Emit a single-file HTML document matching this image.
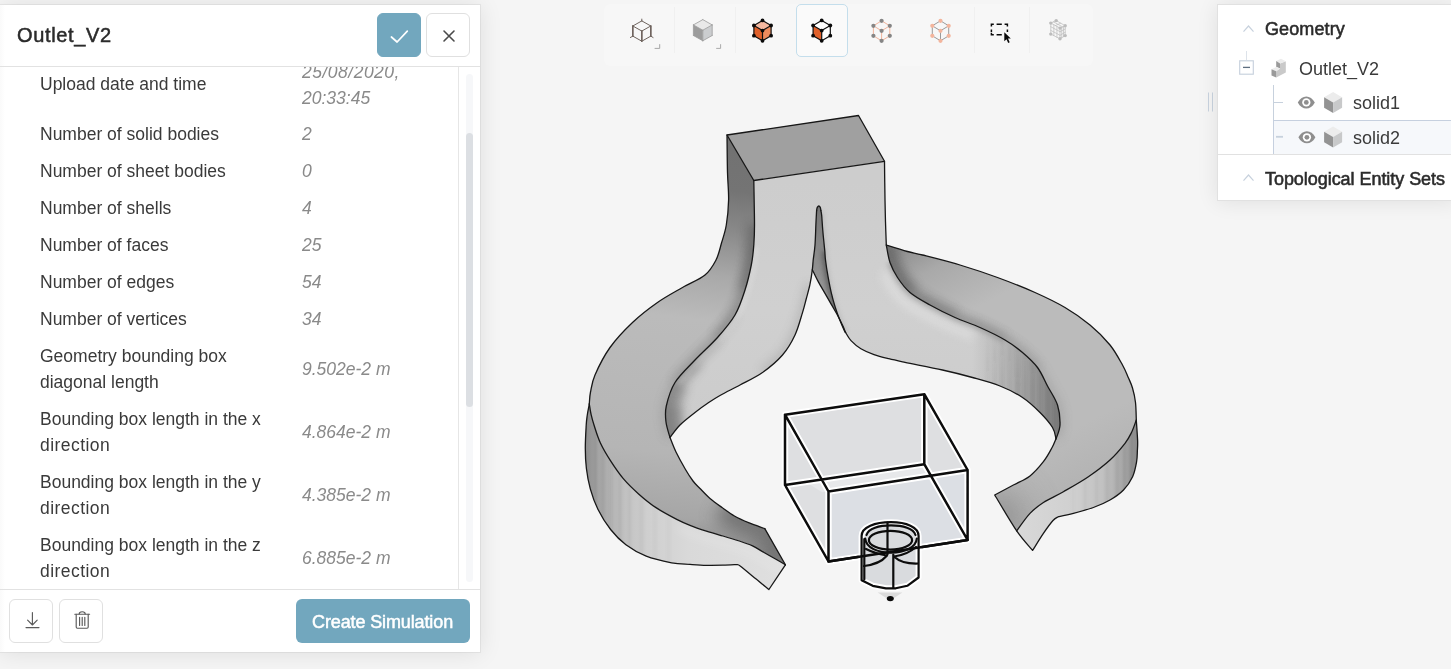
<!DOCTYPE html>
<html lang="en">
<head>
<meta charset="utf-8">
<title>Outlet_V2</title>
<style>
*{box-sizing:border-box;margin:0;padding:0}
html,body{width:1451px;height:669px;overflow:hidden}
body{background:#f5f5f5;font-family:"Liberation Sans",sans-serif;color:#333;position:relative}
.abs{position:absolute}
/* force grayscale text anti-aliasing (as in the reference) */
#lp h1,#scroll,#create span,#rp .sec,#rp .it{will-change:transform}
/* ---------- left panel ---------- */
#lp{position:absolute;left:0;top:5px;width:480px;height:647px;background:linear-gradient(to right,#fafafa,#fff 5px) #fff;box-shadow:0 0 0 1px rgba(0,0,0,.05),0 1px 22px rgba(0,0,0,.10)}
#lp .hd{position:absolute;left:0;top:0;width:480px;height:62px;border-bottom:1px solid #e2e2e2}
#lp h1{position:absolute;left:17px;top:17px;font-size:20px;line-height:26px;font-weight:400;color:#2b2b2b;letter-spacing:.65px;white-space:nowrap;-webkit-text-stroke:.5px #2b2b2b}
.btn{position:absolute;width:44px;height:44px;border-radius:6px;border:1px solid #e0e0e0;background:#fff}
.btn svg{position:absolute;left:0;top:0}
.btn.pri{background:#72a7be;border-color:#72a7be}
#scroll{position:absolute;left:0;top:62px;width:480px;height:522px;overflow:hidden}
#scroll .vl{position:absolute;left:458px;top:0;width:1px;height:522px;background:#e6e6e6}
#scroll .trk{position:absolute;left:466px;top:7px;width:7px;height:508px;border-radius:4px;background:#f6f7f9}
#scroll .thb{position:absolute;left:466px;top:66px;width:7px;height:274px;border-radius:4px;background:#dcdfe3}
.row{position:absolute;left:40px;width:400px;font-size:17.5px;line-height:26px;color:#3a3a3a;white-space:nowrap}
.row .v{position:absolute;left:262px;top:0;font-style:italic;color:#8a8a8a}
#lp .ft{position:absolute;left:0;top:584px;width:480px;height:63px;border-top:1px solid #e2e2e2}
#create{position:absolute;left:296px;top:594px;width:174px;height:44px;border-radius:6px;background:#72a7be;color:#fff;font-weight:400;font-size:18px;letter-spacing:-.12px;line-height:46px;text-align:center;overflow:hidden;white-space:nowrap;-webkit-text-stroke:.5px #fff}
/* ---------- toolbar ---------- */
#tb{position:absolute;left:604px;top:4px;width:489px;height:62px;border-radius:6px;background:rgba(255,255,255,.22)}
#tb .sep{position:absolute;top:3px;width:1px;height:46px;background:#f0f0f0}
#tb .sel{position:absolute;left:192px;top:0;width:52px;height:53px;border:1px solid #c4deec;border-radius:5px;background:#fafafa}
/* ---------- right panel ---------- */
#rp{position:absolute;left:1217px;top:4px;width:240px;height:197px;background:#fff;border:1px solid #e1e1e1;box-shadow:0 1px 20px rgba(0,0,0,.09)}
#rp .sec{position:absolute;left:47px;font-size:18px;font-weight:400;color:#2b2b2b;white-space:nowrap;line-height:24px;-webkit-text-stroke:.55px #2b2b2b}
#rp .it{position:absolute;font-size:18px;color:#3a3a3a;white-space:nowrap;line-height:24px}
#rp .selrow{position:absolute;left:55px;top:115px;width:190px;height:35px;background:#f6f8fb;border:1px solid #c6d0df}
#rp .div{position:absolute;left:0;top:149px;width:240px;height:1px;background:#e1e1e1}
</style>
</head>
<body>
<svg class="abs" style="left:0;top:0" width="1451" height="669" viewBox="0 0 1451 669">
<defs>
<linearGradient id="gLtop" gradientUnits="userSpaceOnUse" x1="740" y1="150" x2="690" y2="560"><stop offset="0" stop-color="#727272"/><stop offset=".10" stop-color="#747474"/><stop offset=".2" stop-color="#8a8a8a"/><stop offset=".31" stop-color="#a9a9a9"/><stop offset=".42" stop-color="#bbbbbb"/><stop offset=".75" stop-color="#b5b5b5"/><stop offset=".90" stop-color="#a6a6a6"/><stop offset="1" stop-color="#858585"/></linearGradient>
<linearGradient id="gLwall" gradientUnits="userSpaceOnUse" x1="586" y1="0" x2="790" y2="0"><stop offset="0" stop-color="#8e8e8e"/><stop offset=".06" stop-color="#a5a5a5"/><stop offset=".13" stop-color="#b5b5b5"/><stop offset=".2" stop-color="#c3c3c3"/><stop offset=".3" stop-color="#cfcfcf"/><stop offset=".5" stop-color="#d9d9d9"/><stop offset="1" stop-color="#e0e0e0"/></linearGradient>
<linearGradient id="gFront" gradientUnits="userSpaceOnUse" x1="0" y1="180" x2="0" y2="440"><stop offset="0" stop-color="#cdcdcd"/><stop offset=".5" stop-color="#d0d0d0"/><stop offset="1" stop-color="#cbcbcb"/></linearGradient>
<linearGradient id="gRtop" gradientUnits="userSpaceOnUse" x1="890" y1="250" x2="1030" y2="520"><stop offset="0" stop-color="#8c8c8c"/><stop offset=".12" stop-color="#a9a9a9"/><stop offset=".3" stop-color="#bbbbbb"/><stop offset=".8" stop-color="#bbbbbb"/><stop offset="1" stop-color="#b2b2b2"/></linearGradient>
<linearGradient id="gRwall" gradientUnits="userSpaceOnUse" x1="1138" y1="0" x2="1020" y2="0"><stop offset="0" stop-color="#888888"/><stop offset=".1" stop-color="#a2a2a2"/><stop offset=".2" stop-color="#b4b4b4"/><stop offset=".3" stop-color="#c1c1c1"/><stop offset=".55" stop-color="#d0d0d0"/><stop offset="1" stop-color="#d8d8d8"/></linearGradient>
<linearGradient id="gWedge" gradientUnits="userSpaceOnUse" x1="0" y1="206" x2="0" y2="332"><stop offset="0" stop-color="#767676"/><stop offset=".4" stop-color="#8c8c8c"/><stop offset="1" stop-color="#a4a4a4"/></linearGradient>
<linearGradient id="gStripe" gradientUnits="userSpaceOnUse" x1="0" y1="335" x2="0" y2="385"><stop offset="0" stop-color="#484848" stop-opacity="0"/><stop offset="1" stop-color="#484848" stop-opacity="1"/></linearGradient>
<linearGradient id="gRinner" gradientUnits="userSpaceOnUse" x1="972" y1="0" x2="1060" y2="0"><stop offset="0" stop-color="#7a7a7a" stop-opacity="0"/><stop offset=".35" stop-color="#7a7a7a" stop-opacity=".28"/><stop offset=".7" stop-color="#7a7a7a" stop-opacity=".62"/><stop offset="1" stop-color="#767676" stop-opacity=".95"/></linearGradient>
<filter id="b1" filterUnits="userSpaceOnUse" x="520" y="90" width="680" height="540"><feGaussianBlur stdDeviation="1.1"/></filter>
<filter id="b2" filterUnits="userSpaceOnUse" x="520" y="90" width="680" height="540"><feGaussianBlur stdDeviation="2.2"/></filter>
<filter id="b4" filterUnits="userSpaceOnUse" x="520" y="90" width="680" height="540"><feGaussianBlur stdDeviation="5"/></filter>
<filter id="b14" filterUnits="userSpaceOnUse" x="520" y="90" width="680" height="540"><feGaussianBlur stdDeviation="15"/></filter>
<filter id="b8" filterUnits="userSpaceOnUse" x="520" y="90" width="680" height="540"><feGaussianBlur stdDeviation="9"/></filter>
<clipPath id="cLtop"><path d="M727.0 135.0 C727.1 141.2 727.2 161.7 727.5 172.5 C727.8 183.3 728.8 191.2 728.6 200.0 C728.4 208.8 727.5 217.8 726.3 225.0 C725.1 232.2 723.2 237.2 721.5 243.0 C719.8 248.8 718.8 254.7 716.0 260.0 C713.2 265.3 710.6 270.4 705.0 275.0 C699.4 279.6 690.4 282.9 682.5 287.5 C674.6 292.1 665.8 296.7 657.5 302.5 C649.2 308.3 640.4 315.0 632.5 322.5 C624.6 330.0 616.2 338.8 610.0 347.5 C603.8 356.2 598.2 367.6 595.0 375.0 C591.8 382.4 591.5 387.2 590.5 392.0 C589.5 396.8 589.5 402.0 589.3 404.0 C589.6 405.7 590.2 410.5 591.0 414.0 C591.8 417.5 592.4 420.2 594.0 425.0 C595.6 429.8 597.6 437.0 600.4 443.0 C603.2 449.0 606.8 455.0 610.6 460.9 C614.4 466.8 618.6 473.1 623.3 478.6 C628.0 484.1 633.1 489.0 638.6 493.9 C644.1 498.8 650.0 503.7 656.4 507.9 C662.8 512.1 671.1 516.4 676.7 519.3 C682.3 522.2 685.0 523.3 690.0 525.3 C695.0 527.3 700.9 529.3 706.4 531.1 C711.9 532.9 717.4 534.4 722.9 536.0 C728.4 537.6 734.4 539.4 739.3 541.0 C744.2 542.6 748.4 544.0 752.5 545.9 C756.6 547.8 760.2 550.3 764.0 552.5 C767.8 554.7 771.9 557.0 775.5 559.0 C779.1 561.0 783.8 563.8 785.4 564.8 L764.8 528.6 C762.2 527.6 754.3 525.0 749.2 522.9 C744.1 520.8 738.9 518.6 734.4 516.0 C729.9 513.4 726.1 510.4 722.0 507.5 C717.9 504.6 713.7 501.7 710.0 498.5 C706.3 495.3 702.8 491.4 700.0 488.5 C697.2 485.6 695.4 484.2 693.0 481.0 C690.6 477.8 688.3 474.3 685.5 469.5 C682.7 464.7 678.6 457.3 676.0 452.0 C673.4 446.7 671.0 439.9 670.0 437.5 C669.3 434.9 666.6 427.2 666.0 422.0 C665.4 416.8 664.8 412.6 666.3 406.0 C667.8 399.4 670.2 390.2 675.0 382.5 C679.8 374.8 687.9 367.5 695.0 360.0 C702.1 352.5 710.8 345.0 717.5 337.5 C724.2 330.0 730.4 322.9 735.0 315.0 C739.6 307.1 742.3 298.3 745.0 290.0 C747.7 281.7 749.8 272.5 751.3 265.0 C752.8 257.5 753.3 251.7 753.8 245.0 C754.3 238.3 754.5 235.8 754.5 225.0 C754.5 214.2 753.9 187.9 753.8 180.5 Z"/></clipPath>
<clipPath id="cLwall"><path d="M589.3 404.0 C589.6 405.7 590.2 410.5 591.0 414.0 C591.8 417.5 592.4 420.2 594.0 425.0 C595.6 429.8 597.6 437.0 600.4 443.0 C603.2 449.0 606.8 455.0 610.6 460.9 C614.4 466.8 618.6 473.1 623.3 478.6 C628.0 484.1 633.1 489.0 638.6 493.9 C644.1 498.8 650.0 503.7 656.4 507.9 C662.8 512.1 671.1 516.4 676.7 519.3 C682.3 522.2 685.0 523.3 690.0 525.3 C695.0 527.3 700.9 529.3 706.4 531.1 C711.9 532.9 717.4 534.4 722.9 536.0 C728.4 537.6 734.4 539.4 739.3 541.0 C744.2 542.6 748.4 544.0 752.5 545.9 C756.6 547.8 760.2 550.3 764.0 552.5 C767.8 554.7 771.9 557.0 775.5 559.0 C779.1 561.0 783.8 563.8 785.4 564.8 L768.9 589.5 C766.7 587.7 760.5 582.7 755.8 578.8 C751.1 574.9 743.6 568.6 740.5 566.2 C737.4 563.8 737.5 564.9 736.9 564.6 C734.6 564.7 728.0 565.1 722.9 565.2 C717.8 565.3 711.9 565.4 706.4 565.3 C700.9 565.2 695.8 564.8 690.0 564.4 C684.2 564.0 678.9 564.2 671.6 562.8 C664.3 561.4 653.8 559.2 646.2 556.2 C638.6 553.2 631.8 549.2 625.9 544.8 C620.0 540.3 615.3 535.4 610.6 529.5 C605.9 523.6 601.3 516.0 597.9 509.2 C594.5 502.4 592.2 495.6 590.3 488.8 C588.4 482.0 587.2 475.3 586.4 468.5 C585.6 461.7 585.3 455.2 585.3 448.0 C585.3 440.8 585.9 430.8 586.2 425.3 C586.5 419.8 586.8 418.6 587.3 415.0 C587.8 411.4 589.0 405.8 589.3 404.0 Z"/></clipPath>
<clipPath id="cFront"><path d="M753.8 180.5 L884.5 161.3 C884.6 167.8 884.8 189.9 885.0 200.0 C885.2 210.1 885.3 214.5 885.5 222.0 C885.7 229.5 886.2 241.2 886.3 245.0 C886.9 247.9 888.1 257.1 890.0 262.5 C891.9 267.9 894.2 272.5 897.5 277.5 C900.8 282.5 904.6 287.9 910.0 292.5 C915.4 297.1 922.5 300.8 930.0 305.0 C937.5 309.2 946.7 313.8 955.0 317.5 C963.3 321.2 971.7 323.8 980.0 327.5 C988.3 331.2 997.9 335.8 1005.0 340.0 C1012.1 344.2 1017.1 347.9 1022.5 352.5 C1027.9 357.1 1033.3 361.9 1037.5 367.5 C1041.7 373.1 1044.2 379.8 1047.5 386.0 C1050.8 392.2 1055.4 398.5 1057.5 405.0 C1059.6 411.5 1060.2 419.4 1060.0 425.0 C1059.8 430.6 1056.7 436.5 1056.0 438.8 C1055.4 436.9 1055.2 431.9 1052.5 427.5 C1049.8 423.1 1045.0 417.5 1040.0 412.5 C1035.0 407.5 1029.2 401.9 1022.5 397.5 C1015.8 393.1 1008.3 389.3 1000.0 386.0 C991.7 382.7 982.1 380.2 972.5 377.5 C962.9 374.8 953.8 372.5 942.5 370.0 C931.2 367.5 914.0 364.2 905.0 362.3 C896.0 360.4 894.0 360.0 888.8 358.7 C883.6 357.4 878.6 356.2 874.0 354.6 C869.4 353.0 864.7 351.1 860.9 348.8 C857.1 346.5 853.6 343.3 851.0 340.6 C848.4 337.9 846.4 333.8 845.5 332.4 C845.3 332.1 845.4 332.9 844.4 330.7 C843.4 328.5 841.0 323.0 839.5 319.2 C838.0 315.4 836.8 312.1 835.4 307.7 C834.0 303.3 832.5 298.1 831.3 292.9 C830.1 287.7 829.0 281.9 828.0 276.4 C827.0 270.9 826.0 264.2 825.5 260.0 C825.0 255.8 825.2 255.9 824.8 251.0 C824.3 246.1 823.3 236.7 822.8 230.8 C822.3 224.9 822.0 219.0 821.7 215.6 C821.4 212.2 821.0 211.3 820.9 210.5 C820.8 210.0 820.6 208.2 820.3 207.4 C819.9 206.7 819.3 206.0 818.8 206.0 C818.3 206.0 817.7 206.7 817.3 207.4 C816.9 208.2 816.7 210.0 816.6 210.5 C816.5 212.4 816.3 216.2 816.0 222.0 C815.7 227.8 815.5 238.7 815.0 245.0 C814.5 251.3 813.7 255.8 813.2 260.0 C812.8 264.1 812.8 265.8 812.3 269.9 C811.8 274.0 810.9 279.8 809.9 284.7 C808.9 289.6 807.4 294.4 806.2 299.0 C805.0 303.6 804.4 306.6 802.5 312.6 C800.6 318.6 798.3 327.9 795.0 335.0 C791.7 342.1 787.9 348.8 782.5 355.0 C777.1 361.2 769.6 367.5 762.5 372.5 C755.4 377.5 747.1 381.2 740.0 385.0 C732.9 388.8 725.3 392.5 720.0 395.5 C714.7 398.5 712.2 400.2 708.0 403.0 C703.8 405.8 699.7 408.8 695.0 412.5 C690.3 416.2 684.2 420.8 680.0 425.0 C675.8 429.2 671.7 435.4 670.0 437.5 C669.3 434.9 666.6 427.2 666.0 422.0 C665.4 416.8 664.8 412.6 666.3 406.0 C667.8 399.4 670.2 390.2 675.0 382.5 C679.8 374.8 687.9 367.5 695.0 360.0 C702.1 352.5 710.8 345.0 717.5 337.5 C724.2 330.0 730.4 322.9 735.0 315.0 C739.6 307.1 742.3 298.3 745.0 290.0 C747.7 281.7 749.8 272.5 751.3 265.0 C752.8 257.5 753.3 251.7 753.8 245.0 C754.3 238.3 754.5 235.8 754.5 225.0 C754.5 214.2 753.9 187.9 753.8 180.5 Z"/></clipPath>
<clipPath id="cRtop"><path d="M886.3 245.0 C889.8 246.1 901.5 249.8 907.5 251.5 C913.5 253.2 913.8 252.8 922.5 255.0 C931.2 257.2 947.5 261.2 960.0 265.0 C972.5 268.8 985.0 272.9 997.5 277.5 C1010.0 282.1 1023.8 287.5 1035.0 292.5 C1046.2 297.5 1055.8 302.1 1065.0 307.5 C1074.2 312.9 1082.5 318.8 1090.0 325.0 C1097.5 331.2 1104.6 338.3 1110.0 345.0 C1115.4 351.7 1119.4 359.5 1122.5 365.0 C1125.6 370.5 1126.8 374.2 1128.5 378.0 C1130.2 381.8 1131.3 383.9 1132.5 388.0 C1133.7 392.1 1134.9 397.2 1135.5 402.5 C1136.1 407.8 1136.2 417.1 1136.3 420.0 C1135.5 422.1 1133.4 428.6 1131.5 432.5 C1129.6 436.4 1128.6 438.7 1125.0 443.3 C1121.4 447.9 1116.1 454.4 1110.0 460.0 C1103.9 465.6 1096.2 471.4 1088.4 476.7 C1080.6 482.0 1070.9 487.4 1063.4 491.7 C1055.9 496.0 1049.0 498.9 1043.4 502.5 C1037.8 506.1 1034.5 508.7 1030.0 513.4 C1025.5 518.1 1018.9 528.0 1016.7 530.9 L994.7 495.0 C997.8 493.3 1007.5 488.2 1013.4 485.0 C1019.3 481.8 1025.0 479.8 1030.0 475.9 C1035.0 472.0 1039.8 466.3 1043.4 461.7 C1047.0 457.1 1049.6 452.1 1051.7 448.3 C1053.8 444.5 1055.3 440.4 1056.0 438.8 C1056.7 436.5 1059.8 430.6 1060.0 425.0 C1060.2 419.4 1059.6 411.5 1057.5 405.0 C1055.4 398.5 1050.8 392.2 1047.5 386.0 C1044.2 379.8 1041.7 373.1 1037.5 367.5 C1033.3 361.9 1027.9 357.1 1022.5 352.5 C1017.1 347.9 1012.1 344.2 1005.0 340.0 C997.9 335.8 988.3 331.2 980.0 327.5 C971.7 323.8 963.3 321.2 955.0 317.5 C946.7 313.8 937.5 309.2 930.0 305.0 C922.5 300.8 915.4 297.1 910.0 292.5 C904.6 287.9 900.8 282.5 897.5 277.5 C894.2 272.5 891.9 267.9 890.0 262.5 C888.1 257.1 886.9 247.9 886.3 245.0 Z"/></clipPath>
<clipPath id="cRwall"><path d="M1136.3 420.0 C1135.5 422.1 1133.4 428.6 1131.5 432.5 C1129.6 436.4 1128.6 438.7 1125.0 443.3 C1121.4 447.9 1116.1 454.4 1110.0 460.0 C1103.9 465.6 1096.2 471.4 1088.4 476.7 C1080.6 482.0 1070.9 487.4 1063.4 491.7 C1055.9 496.0 1049.0 498.9 1043.4 502.5 C1037.8 506.1 1034.5 508.7 1030.0 513.4 C1025.5 518.1 1018.9 528.0 1016.7 530.9 L1032.6 550.4 C1034.4 547.6 1040.0 538.4 1043.4 533.4 C1046.8 528.4 1050.5 523.3 1053.0 520.5 C1055.5 517.7 1057.5 517.3 1058.4 516.7 C1060.9 516.2 1067.6 514.9 1073.4 513.4 C1079.2 511.9 1087.3 509.7 1093.4 507.5 C1099.5 505.3 1105.0 502.9 1110.0 500.0 C1115.0 497.1 1119.7 493.9 1123.5 490.0 C1127.3 486.1 1130.4 481.4 1132.6 476.7 C1134.8 472.0 1135.8 466.1 1136.6 461.7 C1137.4 457.2 1137.2 453.6 1137.4 450.0 C1137.6 446.4 1137.8 445.0 1137.6 440.0 C1137.4 435.0 1136.5 423.3 1136.3 420.0 Z"/></clipPath>
<clipPath id="cWedge"><path d="M820.9 210.5 C821.0 211.3 821.4 212.2 821.7 215.6 C822.0 219.0 822.3 224.9 822.8 230.8 C823.3 236.7 824.3 246.1 824.8 251.0 C825.2 255.9 825.0 255.8 825.5 260.0 C826.0 264.2 827.0 270.9 828.0 276.4 C829.0 281.9 830.1 287.7 831.3 292.9 C832.5 298.1 834.0 303.3 835.4 307.7 C836.8 312.1 838.0 315.4 839.5 319.2 C841.0 323.0 843.4 328.5 844.4 330.7 C845.4 332.9 845.3 332.1 845.5 332.4 C845.0 331.3 844.2 328.8 842.8 325.8 C841.4 322.8 838.9 317.9 837.0 314.3 C835.1 310.7 833.3 308.0 831.3 304.4 C829.2 300.8 826.9 296.7 824.7 292.9 C822.5 289.1 820.0 284.9 818.1 281.4 C816.2 277.9 814.4 273.9 813.4 272.0 C812.4 270.1 812.5 270.2 812.3 269.9 C812.4 268.2 812.8 264.1 813.2 260.0 C813.7 255.8 814.5 251.3 815.0 245.0 C815.5 238.7 815.7 227.8 816.0 222.0 C816.3 216.2 816.5 212.4 816.6 210.5 C816.7 210.0 816.9 208.2 817.3 207.4 C817.7 206.7 818.3 206.0 818.8 206.0 C819.3 206.0 819.9 206.7 820.3 207.4 C820.6 208.2 820.8 210.0 820.9 210.5 Z"/></clipPath>
</defs>
<path d="M727.0 135.0 L858.5 115.5 L884.5 161.3 L753.8 180.5Z" fill="#a0a0a0"/>
<path d="M727.0 135.0 C727.1 141.2 727.2 161.7 727.5 172.5 C727.8 183.3 728.8 191.2 728.6 200.0 C728.4 208.8 727.5 217.8 726.3 225.0 C725.1 232.2 723.2 237.2 721.5 243.0 C719.8 248.8 718.8 254.7 716.0 260.0 C713.2 265.3 710.6 270.4 705.0 275.0 C699.4 279.6 690.4 282.9 682.5 287.5 C674.6 292.1 665.8 296.7 657.5 302.5 C649.2 308.3 640.4 315.0 632.5 322.5 C624.6 330.0 616.2 338.8 610.0 347.5 C603.8 356.2 598.2 367.6 595.0 375.0 C591.8 382.4 591.5 387.2 590.5 392.0 C589.5 396.8 589.5 402.0 589.3 404.0 C589.6 405.7 590.2 410.5 591.0 414.0 C591.8 417.5 592.4 420.2 594.0 425.0 C595.6 429.8 597.6 437.0 600.4 443.0 C603.2 449.0 606.8 455.0 610.6 460.9 C614.4 466.8 618.6 473.1 623.3 478.6 C628.0 484.1 633.1 489.0 638.6 493.9 C644.1 498.8 650.0 503.7 656.4 507.9 C662.8 512.1 671.1 516.4 676.7 519.3 C682.3 522.2 685.0 523.3 690.0 525.3 C695.0 527.3 700.9 529.3 706.4 531.1 C711.9 532.9 717.4 534.4 722.9 536.0 C728.4 537.6 734.4 539.4 739.3 541.0 C744.2 542.6 748.4 544.0 752.5 545.9 C756.6 547.8 760.2 550.3 764.0 552.5 C767.8 554.7 771.9 557.0 775.5 559.0 C779.1 561.0 783.8 563.8 785.4 564.8 L764.8 528.6 C762.2 527.6 754.3 525.0 749.2 522.9 C744.1 520.8 738.9 518.6 734.4 516.0 C729.9 513.4 726.1 510.4 722.0 507.5 C717.9 504.6 713.7 501.7 710.0 498.5 C706.3 495.3 702.8 491.4 700.0 488.5 C697.2 485.6 695.4 484.2 693.0 481.0 C690.6 477.8 688.3 474.3 685.5 469.5 C682.7 464.7 678.6 457.3 676.0 452.0 C673.4 446.7 671.0 439.9 670.0 437.5 C669.3 434.9 666.6 427.2 666.0 422.0 C665.4 416.8 664.8 412.6 666.3 406.0 C667.8 399.4 670.2 390.2 675.0 382.5 C679.8 374.8 687.9 367.5 695.0 360.0 C702.1 352.5 710.8 345.0 717.5 337.5 C724.2 330.0 730.4 322.9 735.0 315.0 C739.6 307.1 742.3 298.3 745.0 290.0 C747.7 281.7 749.8 272.5 751.3 265.0 C752.8 257.5 753.3 251.7 753.8 245.0 C754.3 238.3 754.5 235.8 754.5 225.0 C754.5 214.2 753.9 187.9 753.8 180.5 Z" fill="url(#gLtop)"/>
<path d="M589.3 404.0 C589.6 405.7 590.2 410.5 591.0 414.0 C591.8 417.5 592.4 420.2 594.0 425.0 C595.6 429.8 597.6 437.0 600.4 443.0 C603.2 449.0 606.8 455.0 610.6 460.9 C614.4 466.8 618.6 473.1 623.3 478.6 C628.0 484.1 633.1 489.0 638.6 493.9 C644.1 498.8 650.0 503.7 656.4 507.9 C662.8 512.1 671.1 516.4 676.7 519.3 C682.3 522.2 685.0 523.3 690.0 525.3 C695.0 527.3 700.9 529.3 706.4 531.1 C711.9 532.9 717.4 534.4 722.9 536.0 C728.4 537.6 734.4 539.4 739.3 541.0 C744.2 542.6 748.4 544.0 752.5 545.9 C756.6 547.8 760.2 550.3 764.0 552.5 C767.8 554.7 771.9 557.0 775.5 559.0 C779.1 561.0 783.8 563.8 785.4 564.8 L768.9 589.5 C766.7 587.7 760.5 582.7 755.8 578.8 C751.1 574.9 743.6 568.6 740.5 566.2 C737.4 563.8 737.5 564.9 736.9 564.6 C734.6 564.7 728.0 565.1 722.9 565.2 C717.8 565.3 711.9 565.4 706.4 565.3 C700.9 565.2 695.8 564.8 690.0 564.4 C684.2 564.0 678.9 564.2 671.6 562.8 C664.3 561.4 653.8 559.2 646.2 556.2 C638.6 553.2 631.8 549.2 625.9 544.8 C620.0 540.3 615.3 535.4 610.6 529.5 C605.9 523.6 601.3 516.0 597.9 509.2 C594.5 502.4 592.2 495.6 590.3 488.8 C588.4 482.0 587.2 475.3 586.4 468.5 C585.6 461.7 585.3 455.2 585.3 448.0 C585.3 440.8 585.9 430.8 586.2 425.3 C586.5 419.8 586.8 418.6 587.3 415.0 C587.8 411.4 589.0 405.8 589.3 404.0 Z" fill="url(#gLwall)"/>
<path d="M886.3 245.0 C889.8 246.1 901.5 249.8 907.5 251.5 C913.5 253.2 913.8 252.8 922.5 255.0 C931.2 257.2 947.5 261.2 960.0 265.0 C972.5 268.8 985.0 272.9 997.5 277.5 C1010.0 282.1 1023.8 287.5 1035.0 292.5 C1046.2 297.5 1055.8 302.1 1065.0 307.5 C1074.2 312.9 1082.5 318.8 1090.0 325.0 C1097.5 331.2 1104.6 338.3 1110.0 345.0 C1115.4 351.7 1119.4 359.5 1122.5 365.0 C1125.6 370.5 1126.8 374.2 1128.5 378.0 C1130.2 381.8 1131.3 383.9 1132.5 388.0 C1133.7 392.1 1134.9 397.2 1135.5 402.5 C1136.1 407.8 1136.2 417.1 1136.3 420.0 C1135.5 422.1 1133.4 428.6 1131.5 432.5 C1129.6 436.4 1128.6 438.7 1125.0 443.3 C1121.4 447.9 1116.1 454.4 1110.0 460.0 C1103.9 465.6 1096.2 471.4 1088.4 476.7 C1080.6 482.0 1070.9 487.4 1063.4 491.7 C1055.9 496.0 1049.0 498.9 1043.4 502.5 C1037.8 506.1 1034.5 508.7 1030.0 513.4 C1025.5 518.1 1018.9 528.0 1016.7 530.9 L994.7 495.0 C997.8 493.3 1007.5 488.2 1013.4 485.0 C1019.3 481.8 1025.0 479.8 1030.0 475.9 C1035.0 472.0 1039.8 466.3 1043.4 461.7 C1047.0 457.1 1049.6 452.1 1051.7 448.3 C1053.8 444.5 1055.3 440.4 1056.0 438.8 C1056.7 436.5 1059.8 430.6 1060.0 425.0 C1060.2 419.4 1059.6 411.5 1057.5 405.0 C1055.4 398.5 1050.8 392.2 1047.5 386.0 C1044.2 379.8 1041.7 373.1 1037.5 367.5 C1033.3 361.9 1027.9 357.1 1022.5 352.5 C1017.1 347.9 1012.1 344.2 1005.0 340.0 C997.9 335.8 988.3 331.2 980.0 327.5 C971.7 323.8 963.3 321.2 955.0 317.5 C946.7 313.8 937.5 309.2 930.0 305.0 C922.5 300.8 915.4 297.1 910.0 292.5 C904.6 287.9 900.8 282.5 897.5 277.5 C894.2 272.5 891.9 267.9 890.0 262.5 C888.1 257.1 886.9 247.9 886.3 245.0 Z" fill="url(#gRtop)"/>
<path d="M1136.3 420.0 C1135.5 422.1 1133.4 428.6 1131.5 432.5 C1129.6 436.4 1128.6 438.7 1125.0 443.3 C1121.4 447.9 1116.1 454.4 1110.0 460.0 C1103.9 465.6 1096.2 471.4 1088.4 476.7 C1080.6 482.0 1070.9 487.4 1063.4 491.7 C1055.9 496.0 1049.0 498.9 1043.4 502.5 C1037.8 506.1 1034.5 508.7 1030.0 513.4 C1025.5 518.1 1018.9 528.0 1016.7 530.9 L1032.6 550.4 C1034.4 547.6 1040.0 538.4 1043.4 533.4 C1046.8 528.4 1050.5 523.3 1053.0 520.5 C1055.5 517.7 1057.5 517.3 1058.4 516.7 C1060.9 516.2 1067.6 514.9 1073.4 513.4 C1079.2 511.9 1087.3 509.7 1093.4 507.5 C1099.5 505.3 1105.0 502.9 1110.0 500.0 C1115.0 497.1 1119.7 493.9 1123.5 490.0 C1127.3 486.1 1130.4 481.4 1132.6 476.7 C1134.8 472.0 1135.8 466.1 1136.6 461.7 C1137.4 457.2 1137.2 453.6 1137.4 450.0 C1137.6 446.4 1137.8 445.0 1137.6 440.0 C1137.4 435.0 1136.5 423.3 1136.3 420.0 Z" fill="url(#gRwall)"/>
<path d="M753.8 180.5 L884.5 161.3 C884.6 167.8 884.8 189.9 885.0 200.0 C885.2 210.1 885.3 214.5 885.5 222.0 C885.7 229.5 886.2 241.2 886.3 245.0 C886.9 247.9 888.1 257.1 890.0 262.5 C891.9 267.9 894.2 272.5 897.5 277.5 C900.8 282.5 904.6 287.9 910.0 292.5 C915.4 297.1 922.5 300.8 930.0 305.0 C937.5 309.2 946.7 313.8 955.0 317.5 C963.3 321.2 971.7 323.8 980.0 327.5 C988.3 331.2 997.9 335.8 1005.0 340.0 C1012.1 344.2 1017.1 347.9 1022.5 352.5 C1027.9 357.1 1033.3 361.9 1037.5 367.5 C1041.7 373.1 1044.2 379.8 1047.5 386.0 C1050.8 392.2 1055.4 398.5 1057.5 405.0 C1059.6 411.5 1060.2 419.4 1060.0 425.0 C1059.8 430.6 1056.7 436.5 1056.0 438.8 C1055.4 436.9 1055.2 431.9 1052.5 427.5 C1049.8 423.1 1045.0 417.5 1040.0 412.5 C1035.0 407.5 1029.2 401.9 1022.5 397.5 C1015.8 393.1 1008.3 389.3 1000.0 386.0 C991.7 382.7 982.1 380.2 972.5 377.5 C962.9 374.8 953.8 372.5 942.5 370.0 C931.2 367.5 914.0 364.2 905.0 362.3 C896.0 360.4 894.0 360.0 888.8 358.7 C883.6 357.4 878.6 356.2 874.0 354.6 C869.4 353.0 864.7 351.1 860.9 348.8 C857.1 346.5 853.6 343.3 851.0 340.6 C848.4 337.9 846.4 333.8 845.5 332.4 C845.3 332.1 845.4 332.9 844.4 330.7 C843.4 328.5 841.0 323.0 839.5 319.2 C838.0 315.4 836.8 312.1 835.4 307.7 C834.0 303.3 832.5 298.1 831.3 292.9 C830.1 287.7 829.0 281.9 828.0 276.4 C827.0 270.9 826.0 264.2 825.5 260.0 C825.0 255.8 825.2 255.9 824.8 251.0 C824.3 246.1 823.3 236.7 822.8 230.8 C822.3 224.9 822.0 219.0 821.7 215.6 C821.4 212.2 821.0 211.3 820.9 210.5 C820.8 210.0 820.6 208.2 820.3 207.4 C819.9 206.7 819.3 206.0 818.8 206.0 C818.3 206.0 817.7 206.7 817.3 207.4 C816.9 208.2 816.7 210.0 816.6 210.5 C816.5 212.4 816.3 216.2 816.0 222.0 C815.7 227.8 815.5 238.7 815.0 245.0 C814.5 251.3 813.7 255.8 813.2 260.0 C812.8 264.1 812.8 265.8 812.3 269.9 C811.8 274.0 810.9 279.8 809.9 284.7 C808.9 289.6 807.4 294.4 806.2 299.0 C805.0 303.6 804.4 306.6 802.5 312.6 C800.6 318.6 798.3 327.9 795.0 335.0 C791.7 342.1 787.9 348.8 782.5 355.0 C777.1 361.2 769.6 367.5 762.5 372.5 C755.4 377.5 747.1 381.2 740.0 385.0 C732.9 388.8 725.3 392.5 720.0 395.5 C714.7 398.5 712.2 400.2 708.0 403.0 C703.8 405.8 699.7 408.8 695.0 412.5 C690.3 416.2 684.2 420.8 680.0 425.0 C675.8 429.2 671.7 435.4 670.0 437.5 C669.3 434.9 666.6 427.2 666.0 422.0 C665.4 416.8 664.8 412.6 666.3 406.0 C667.8 399.4 670.2 390.2 675.0 382.5 C679.8 374.8 687.9 367.5 695.0 360.0 C702.1 352.5 710.8 345.0 717.5 337.5 C724.2 330.0 730.4 322.9 735.0 315.0 C739.6 307.1 742.3 298.3 745.0 290.0 C747.7 281.7 749.8 272.5 751.3 265.0 C752.8 257.5 753.3 251.7 753.8 245.0 C754.3 238.3 754.5 235.8 754.5 225.0 C754.5 214.2 753.9 187.9 753.8 180.5 Z" fill="url(#gFront)"/>
<path d="M820.9 210.5 C821.0 211.3 821.4 212.2 821.7 215.6 C822.0 219.0 822.3 224.9 822.8 230.8 C823.3 236.7 824.3 246.1 824.8 251.0 C825.2 255.9 825.0 255.8 825.5 260.0 C826.0 264.2 827.0 270.9 828.0 276.4 C829.0 281.9 830.1 287.7 831.3 292.9 C832.5 298.1 834.0 303.3 835.4 307.7 C836.8 312.1 838.0 315.4 839.5 319.2 C841.0 323.0 843.4 328.5 844.4 330.7 C845.4 332.9 845.3 332.1 845.5 332.4 C845.0 331.3 844.2 328.8 842.8 325.8 C841.4 322.8 838.9 317.9 837.0 314.3 C835.1 310.7 833.3 308.0 831.3 304.4 C829.2 300.8 826.9 296.7 824.7 292.9 C822.5 289.1 820.0 284.9 818.1 281.4 C816.2 277.9 814.4 273.9 813.4 272.0 C812.4 270.1 812.5 270.2 812.3 269.9 C812.4 268.2 812.8 264.1 813.2 260.0 C813.7 255.8 814.5 251.3 815.0 245.0 C815.5 238.7 815.7 227.8 816.0 222.0 C816.3 216.2 816.5 212.4 816.6 210.5 C816.7 210.0 816.9 208.2 817.3 207.4 C817.7 206.7 818.3 206.0 818.8 206.0 C819.3 206.0 819.9 206.7 820.3 207.4 C820.6 208.2 820.8 210.0 820.9 210.5 Z" fill="url(#gWedge)"/>
<g clip-path="url(#cWedge)"><path d="M824.8 251.0 C824.9 252.5 825.0 255.8 825.5 260.0 C826.0 264.2 827.0 270.9 828.0 276.4 C829.0 281.9 830.1 287.7 831.3 292.9 C832.5 298.1 834.0 303.3 835.4 307.7 C836.8 312.1 838.0 315.4 839.5 319.2 C841.0 323.0 843.4 328.5 844.4 330.7 C845.4 332.9 845.3 332.1 845.5 332.4" fill="none" stroke="#555" stroke-width="7" filter="url(#b2)" opacity=".7"/></g>
<g clip-path="url(#cFront)">
<path d="M735.0 315.0 C732.1 318.8 724.2 330.0 717.5 337.5 C710.8 345.0 702.1 352.5 695.0 360.0 C687.9 367.5 679.8 374.8 675.0 382.5 C670.2 390.2 667.8 399.4 666.3 406.0 C664.8 412.6 665.4 416.8 666.0 422.0 C666.6 427.2 669.3 434.9 670.0 437.5 C670.7 440.1 669.0 435.1 670.0 437.5 C671.0 439.9 675.0 449.6 676.0 452.0" fill="none" stroke="#787878" stroke-width="7" filter="url(#b4)" opacity="0.25"/>
<path d="M717.5 337.5 C713.8 341.2 702.1 352.5 695.0 360.0 C687.9 367.5 679.8 374.8 675.0 382.5 C670.2 390.2 667.8 399.4 666.3 406.0 C664.8 412.6 665.4 416.8 666.0 422.0 C666.6 427.2 669.3 434.9 670.0 437.5 C670.7 440.1 669.0 435.1 670.0 437.5 C671.0 439.9 675.0 449.6 676.0 452.0" fill="none" stroke="#787878" stroke-width="12" filter="url(#b4)" opacity="0.30"/>
<path d="M695.0 360.0 C691.7 363.8 679.8 374.8 675.0 382.5 C670.2 390.2 667.8 399.4 666.3 406.0 C664.8 412.6 665.4 416.8 666.0 422.0 C666.6 427.2 669.3 434.9 670.0 437.5 C670.7 440.1 669.0 435.1 670.0 437.5 C671.0 439.9 675.0 449.6 676.0 452.0" fill="none" stroke="#787878" stroke-width="20" filter="url(#b4)" opacity="0.35"/>
<path d="M675.0 382.5 C673.5 386.4 667.8 399.4 666.3 406.0 C664.8 412.6 665.4 416.8 666.0 422.0 C666.6 427.2 669.3 434.9 670.0 437.5 C670.7 440.1 669.0 435.1 670.0 437.5 C671.0 439.9 675.0 449.6 676.0 452.0" fill="none" stroke="#787878" stroke-width="28" filter="url(#b4)" opacity="0.45"/>
<path d="M666.3 406.0 C666.2 408.7 665.4 416.8 666.0 422.0 C666.6 427.2 669.3 434.9 670.0 437.5 C670.7 440.1 669.0 435.1 670.0 437.5 C671.0 439.9 675.0 449.6 676.0 452.0" fill="none" stroke="#787878" stroke-width="34" filter="url(#b4)" opacity="0.45"/>
<path d="M757.2 246.6 C756.8 249.9 756.2 259.1 754.7 266.6 C753.2 274.1 751.1 283.3 748.4 291.6 C745.7 299.9 743.0 308.7 738.4 316.6 C733.8 324.5 727.6 331.6 720.9 339.1 C714.2 346.6 705.5 354.1 698.4 361.6 C691.3 369.1 681.7 380.4 678.4 384.1" fill="none" stroke="#f2f2f2" stroke-width="2.6" filter="url(#b2)" opacity=".32"/>
<path d="M809.9 284.7 C809.3 287.1 807.4 294.4 806.2 299.0 C805.0 303.6 804.4 306.6 802.5 312.6 C800.6 318.6 798.3 327.9 795.0 335.0 C791.7 342.1 787.9 348.8 782.5 355.0 C777.1 361.2 765.8 369.6 762.5 372.5" fill="none" stroke="#9a9a9a" stroke-width="8" filter="url(#b4)" opacity=".45"/>
<rect x="960" y="320" width="110" height="130" fill="url(#gRinner)"/>
<path d="M890.0 262.5 C891.2 265.0 894.2 272.5 897.5 277.5 C900.8 282.5 904.6 287.9 910.0 292.5 C915.4 297.1 922.5 300.8 930.0 305.0 C937.5 309.2 946.7 313.8 955.0 317.5 C963.3 321.2 971.7 323.8 980.0 327.5 C988.3 331.2 1000.8 337.9 1005.0 340.0" fill="none" stroke="#8c8c8c" stroke-width="7" filter="url(#b2)" opacity=".5"/>
<path d="M883.0 271.5 C884.2 274.0 887.2 281.5 890.5 286.5 C893.8 291.5 897.6 296.9 903.0 301.5 C908.4 306.1 915.5 309.8 923.0 314.0 C930.5 318.2 939.7 322.8 948.0 326.5 C956.3 330.2 968.8 334.8 973.0 336.5" fill="none" stroke="#ececec" stroke-width="5" filter="url(#b4)" opacity=".7"/>
<g filter="url(#b1)">
<rect x="986" y="330" width="3" height="115" fill="url(#gStripe)" opacity="0.05"/>
<rect x="993" y="330" width="3" height="115" fill="url(#gStripe)" opacity="0.07"/>
<rect x="1000" y="330" width="4" height="115" fill="url(#gStripe)" opacity="0.09"/>
<rect x="1008" y="330" width="3" height="115" fill="url(#gStripe)" opacity="0.07"/>
<rect x="1015" y="330" width="5" height="115" fill="url(#gStripe)" opacity="0.11"/>
<rect x="1023" y="330" width="4" height="115" fill="url(#gStripe)" opacity="0.08"/>
<rect x="1030" y="330" width="5" height="115" fill="url(#gStripe)" opacity="0.12"/>
<rect x="1038" y="330" width="4" height="115" fill="url(#gStripe)" opacity="0.09"/>
<rect x="1045" y="330" width="5" height="115" fill="url(#gStripe)" opacity="0.12"/>
<rect x="1053" y="330" width="4" height="115" fill="url(#gStripe)" opacity="0.09"/>
</g>
<path d="M820.9 210.5 C821.0 211.3 821.4 212.2 821.7 215.6 C822.0 219.0 822.3 224.9 822.8 230.8 C823.3 236.7 824.3 246.1 824.8 251.0 C825.2 255.9 825.0 255.8 825.5 260.0 C826.0 264.2 827.0 270.9 828.0 276.4 C829.0 281.9 830.1 287.7 831.3 292.9 C832.5 298.1 834.0 303.3 835.4 307.7 C836.8 312.1 838.0 315.4 839.5 319.2 C841.0 323.0 843.4 328.5 844.4 330.7 C845.4 332.9 845.3 332.1 845.5 332.4" fill="none" stroke="#a8a8a8" stroke-width="4" filter="url(#b2)" opacity=".5"/>
</g>
<g clip-path="url(#cLtop)">
<path d="M754.5 225.0 C754.4 228.3 754.3 238.3 753.8 245.0 C753.3 251.7 752.8 257.5 751.3 265.0 C749.8 272.5 746.0 285.8 745.0 290.0" fill="none" stroke="#585858" stroke-width="16" filter="url(#b4)" opacity="0.34"/>
<path d="M754.5 225.0 C754.4 228.3 754.3 238.3 753.8 245.0 C753.3 251.7 752.8 257.5 751.3 265.0 C749.8 272.5 747.7 281.7 745.0 290.0 C742.3 298.3 739.6 307.1 735.0 315.0 C730.4 322.9 720.4 333.8 717.5 337.5" fill="none" stroke="#585858" stroke-width="12" filter="url(#b4)" opacity="0.26"/>
<path d="M753.8 245.0 C753.4 248.3 752.8 257.5 751.3 265.0 C749.8 272.5 747.7 281.7 745.0 290.0 C742.3 298.3 739.6 307.1 735.0 315.0 C730.4 322.9 724.2 330.0 717.5 337.5 C710.8 345.0 702.1 352.5 695.0 360.0 C687.9 367.5 678.3 378.8 675.0 382.5" fill="none" stroke="#585858" stroke-width="9" filter="url(#b4)" opacity="0.22"/>
<path d="M735.0 315.0 C732.1 318.8 724.2 330.0 717.5 337.5 C710.8 345.0 702.1 352.5 695.0 360.0 C687.9 367.5 679.8 374.8 675.0 382.5 C670.2 390.2 667.8 399.4 666.3 406.0 C664.8 412.6 665.4 416.8 666.0 422.0 C666.6 427.2 669.3 434.9 670.0 437.5" fill="none" stroke="#8a8a8a" stroke-width="7" filter="url(#b4)" opacity=".45"/>
<path d="M722.0 507.5 C724.1 508.9 729.9 513.4 734.4 516.0 C738.9 518.6 744.1 520.8 749.2 522.9 C754.3 525.0 758.8 521.6 764.8 528.6 C770.8 535.6 782.0 558.8 785.4 564.8" fill="none" stroke="#6c6c6c" stroke-width="30" filter="url(#b8)" opacity=".85"/>
</g>
<g clip-path="url(#cRtop)">
<path d="M886.3 245.0 C886.9 247.9 888.1 257.1 890.0 262.5 C891.9 267.9 894.2 272.5 897.5 277.5 C900.8 282.5 907.9 290.0 910.0 292.5" fill="none" stroke="#646464" stroke-width="20" filter="url(#b4)" opacity="0.42"/>
<path d="M886.3 245.0 C886.9 247.9 888.1 257.1 890.0 262.5 C891.9 267.9 894.2 272.5 897.5 277.5 C900.8 282.5 904.6 287.9 910.0 292.5 C915.4 297.1 922.5 300.8 930.0 305.0 C937.5 309.2 950.8 315.4 955.0 317.5" fill="none" stroke="#646464" stroke-width="15" filter="url(#b4)" opacity="0.30"/>
<path d="M886.3 245.0 C886.9 247.9 888.1 257.1 890.0 262.5 C891.9 267.9 894.2 272.5 897.5 277.5 C900.8 282.5 904.6 287.9 910.0 292.5 C915.4 297.1 922.5 300.8 930.0 305.0 C937.5 309.2 946.7 313.8 955.0 317.5 C963.3 321.2 971.7 323.8 980.0 327.5 C988.3 331.2 1000.8 337.9 1005.0 340.0" fill="none" stroke="#646464" stroke-width="11" filter="url(#b4)" opacity="0.25"/>
<path d="M886.3 245.0 C886.9 247.9 888.1 257.1 890.0 262.5 C891.9 267.9 894.2 272.5 897.5 277.5 C900.8 282.5 904.6 287.9 910.0 292.5 C915.4 297.1 922.5 300.8 930.0 305.0 C937.5 309.2 946.7 313.8 955.0 317.5 C963.3 321.2 971.7 323.8 980.0 327.5 C988.3 331.2 997.9 335.8 1005.0 340.0 C1012.1 344.2 1017.1 347.9 1022.5 352.5 C1027.9 357.1 1035.0 365.0 1037.5 367.5" fill="none" stroke="#646464" stroke-width="8" filter="url(#b4)" opacity="0.20"/>
<path d="M930.0 305.0 C934.2 307.1 946.7 313.8 955.0 317.5 C963.3 321.2 971.7 323.8 980.0 327.5 C988.3 331.2 997.9 335.8 1005.0 340.0 C1012.1 344.2 1017.1 347.9 1022.5 352.5 C1027.9 357.1 1033.3 361.9 1037.5 367.5 C1041.7 373.1 1044.2 379.8 1047.5 386.0 C1050.8 392.2 1055.4 398.5 1057.5 405.0 C1059.6 411.5 1060.2 419.4 1060.0 425.0 C1059.8 430.6 1056.7 436.5 1056.0 438.8" fill="none" stroke="#8c8c8c" stroke-width="7" filter="url(#b4)" opacity=".45"/>
<path d="M994.7 495.0 L1016.7 530.9" fill="none" stroke="#8a8a8a" stroke-width="16" filter="url(#b8)" opacity=".5"/>
<path d="M994.7 495.0 L1016.7 530.9" fill="none" stroke="#8a8a8a" stroke-width="50" filter="url(#b14)" opacity=".4"/>
</g>
<g clip-path="url(#cLwall)">
<g filter="url(#b1)">
<rect x="594" y="400" width="3" height="180" fill="#303030" opacity="0.060"/>
<rect x="601" y="400" width="4" height="180" fill="#303030" opacity="0.045"/>
<rect x="609" y="400" width="3" height="180" fill="#303030" opacity="0.055"/>
<rect x="618" y="400" width="4" height="180" fill="#303030" opacity="0.040"/>
<rect x="628" y="400" width="3" height="180" fill="#303030" opacity="0.045"/>
<rect x="639" y="400" width="5" height="180" fill="#303030" opacity="0.030"/>
<rect x="653" y="400" width="4" height="180" fill="#303030" opacity="0.025"/>
<rect x="666" y="400" width="5" height="180" fill="#303030" opacity="0.020"/>
</g>
<path d="M676.7 527.3 C678.9 528.3 685.0 531.3 690.0 533.3 C695.0 535.3 700.9 537.3 706.4 539.1 C711.9 540.9 717.4 542.4 722.9 544.0 C728.4 545.6 734.4 547.4 739.3 549.0 C744.2 550.6 748.4 552.0 752.5 553.9 C756.6 555.8 760.2 558.3 764.0 560.5 C767.8 562.7 771.9 565.0 775.5 567.0 C779.1 569.0 783.8 571.8 785.4 572.8" fill="none" stroke="#ffffff" stroke-width="7" filter="url(#b4)" opacity=".16"/>
</g>
<g clip-path="url(#cRwall)"><g filter="url(#b1)">
<rect x="1130" y="415" width="3" height="120" fill="#303030" opacity="0.070"/>
<rect x="1123" y="415" width="3" height="120" fill="#303030" opacity="0.060"/>
<rect x="1115" y="415" width="4" height="120" fill="#303030" opacity="0.050"/>
<rect x="1105" y="415" width="4" height="120" fill="#303030" opacity="0.045"/>
<rect x="1095" y="415" width="3" height="120" fill="#303030" opacity="0.035"/>
<rect x="1083" y="415" width="4" height="120" fill="#303030" opacity="0.030"/>
<rect x="1071" y="415" width="4" height="120" fill="#303030" opacity="0.020"/>
</g></g>
<path d="M727.0 135.0 L858.5 115.5 L884.5 161.3 L753.8 180.5Z" fill="none" stroke="#171717" stroke-width="1.3" stroke-linejoin="round" stroke-linecap="round"/>
<path d="M727.0 135.0 C727.1 141.2 727.2 161.7 727.5 172.5 C727.8 183.3 728.8 191.2 728.6 200.0 C728.4 208.8 727.5 217.8 726.3 225.0 C725.1 232.2 723.2 237.2 721.5 243.0 C719.8 248.8 718.8 254.7 716.0 260.0 C713.2 265.3 710.6 270.4 705.0 275.0 C699.4 279.6 690.4 282.9 682.5 287.5 C674.6 292.1 665.8 296.7 657.5 302.5 C649.2 308.3 640.4 315.0 632.5 322.5 C624.6 330.0 616.2 338.8 610.0 347.5 C603.8 356.2 598.2 367.6 595.0 375.0 C591.8 382.4 591.5 387.2 590.5 392.0 C589.5 396.8 589.5 402.0 589.3 404.0" fill="none" stroke="#171717" stroke-width="1.3" stroke-linejoin="round" stroke-linecap="round"/>
<path d="M753.8 180.5 C753.9 187.9 754.5 214.2 754.5 225.0 C754.5 235.8 754.3 238.3 753.8 245.0 C753.3 251.7 752.8 257.5 751.3 265.0 C749.8 272.5 747.7 281.7 745.0 290.0 C742.3 298.3 739.6 307.1 735.0 315.0 C730.4 322.9 724.2 330.0 717.5 337.5 C710.8 345.0 702.1 352.5 695.0 360.0 C687.9 367.5 679.8 374.8 675.0 382.5 C670.2 390.2 667.8 399.4 666.3 406.0 C664.8 412.6 665.4 416.8 666.0 422.0 C666.6 427.2 669.3 434.9 670.0 437.5 C671.0 439.9 673.4 446.7 676.0 452.0 C678.6 457.3 682.7 464.7 685.5 469.5 C688.3 474.3 690.6 477.8 693.0 481.0 C695.4 484.2 697.2 485.6 700.0 488.5 C702.8 491.4 706.3 495.3 710.0 498.5 C713.7 501.7 717.9 504.6 722.0 507.5 C726.1 510.4 729.9 513.4 734.4 516.0 C738.9 518.6 744.1 520.8 749.2 522.9 C754.3 525.0 762.2 527.6 764.8 528.6" fill="none" stroke="#171717" stroke-width="1.3" stroke-linejoin="round" stroke-linecap="round"/>
<path d="M816.6 210.5 C816.5 212.4 816.3 216.2 816.0 222.0 C815.7 227.8 815.5 238.7 815.0 245.0 C814.5 251.3 813.7 255.8 813.2 260.0 C812.8 264.1 812.8 265.8 812.3 269.9 C811.8 274.0 810.9 279.8 809.9 284.7 C808.9 289.6 807.4 294.4 806.2 299.0 C805.0 303.6 804.4 306.6 802.5 312.6 C800.6 318.6 798.3 327.9 795.0 335.0 C791.7 342.1 787.9 348.8 782.5 355.0 C777.1 361.2 769.6 367.5 762.5 372.5 C755.4 377.5 747.1 381.2 740.0 385.0 C732.9 388.8 725.3 392.5 720.0 395.5 C714.7 398.5 712.2 400.2 708.0 403.0 C703.8 405.8 699.7 408.8 695.0 412.5 C690.3 416.2 684.2 420.8 680.0 425.0 C675.8 429.2 671.7 435.4 670.0 437.5" fill="none" stroke="#171717" stroke-width="1.3" stroke-linejoin="round" stroke-linecap="round"/>
<path d="M589.3 404.0 C589.6 405.7 590.2 410.5 591.0 414.0 C591.8 417.5 592.4 420.2 594.0 425.0 C595.6 429.8 597.6 437.0 600.4 443.0 C603.2 449.0 606.8 455.0 610.6 460.9 C614.4 466.8 618.6 473.1 623.3 478.6 C628.0 484.1 633.1 489.0 638.6 493.9 C644.1 498.8 650.0 503.7 656.4 507.9 C662.8 512.1 671.1 516.4 676.7 519.3 C682.3 522.2 685.0 523.3 690.0 525.3 C695.0 527.3 700.9 529.3 706.4 531.1 C711.9 532.9 717.4 534.4 722.9 536.0 C728.4 537.6 734.4 539.4 739.3 541.0 C744.2 542.6 748.4 544.0 752.5 545.9 C756.6 547.8 760.2 550.3 764.0 552.5 C767.8 554.7 771.9 557.0 775.5 559.0 C779.1 561.0 783.8 563.8 785.4 564.8" fill="none" stroke="#171717" stroke-width="1.3" stroke-linejoin="round" stroke-linecap="round"/>
<path d="M589.3 404.0 C589.0 405.8 587.8 411.4 587.3 415.0 C586.8 418.6 586.5 419.8 586.2 425.3 C585.9 430.8 585.3 440.8 585.3 448.0 C585.3 455.2 585.6 461.7 586.4 468.5 C587.2 475.3 588.4 482.0 590.3 488.8 C592.2 495.6 594.5 502.4 597.9 509.2 C601.3 516.0 605.9 523.6 610.6 529.5 C615.3 535.4 620.0 540.3 625.9 544.8 C631.8 549.2 638.6 553.2 646.2 556.2 C653.8 559.2 664.3 561.4 671.6 562.8 C678.9 564.2 684.2 564.0 690.0 564.4 C695.8 564.8 700.9 565.2 706.4 565.3 C711.9 565.4 717.8 565.3 722.9 565.2 C728.0 565.1 734.6 564.7 736.9 564.6 C737.5 564.9 737.4 563.8 740.5 566.2 C743.6 568.6 751.1 574.9 755.8 578.8 C760.5 582.7 766.7 587.7 768.9 589.5 L785.4 564.8" fill="none" stroke="#171717" stroke-width="1.3" stroke-linejoin="round" stroke-linecap="round"/>
<path d="M764.8 528.6 L785.4 564.8" fill="none" stroke="#171717" stroke-width="1.3" stroke-linejoin="round" stroke-linecap="round"/>
<path d="M820.9 210.5 C821.0 211.3 821.4 212.2 821.7 215.6 C822.0 219.0 822.3 224.9 822.8 230.8 C823.3 236.7 824.3 246.1 824.8 251.0 C825.2 255.9 825.0 255.8 825.5 260.0 C826.0 264.2 827.0 270.9 828.0 276.4 C829.0 281.9 830.1 287.7 831.3 292.9 C832.5 298.1 834.0 303.3 835.4 307.7 C836.8 312.1 838.0 315.4 839.5 319.2 C841.0 323.0 843.4 328.5 844.4 330.7 C845.4 332.9 845.3 332.1 845.5 332.4" fill="none" stroke="#171717" stroke-width="1.3" stroke-linejoin="round" stroke-linecap="round"/>
<path d="M812.3 269.9 C812.5 270.2 812.4 270.1 813.4 272.0 C814.4 273.9 816.2 277.9 818.1 281.4 C820.0 284.9 822.5 289.1 824.7 292.9 C826.9 296.7 829.2 300.8 831.3 304.4 C833.3 308.0 835.1 310.7 837.0 314.3 C838.9 317.9 841.4 322.8 842.8 325.8 C844.2 328.8 845.0 331.3 845.5 332.4" fill="none" stroke="#171717" stroke-width="1.3" stroke-linejoin="round" stroke-linecap="round"/>
<path d="M820.9 210.5 C820.8 210.0 820.6 208.2 820.3 207.4 C819.9 206.7 819.3 206.0 818.8 206.0 C818.3 206.0 817.7 206.7 817.3 207.4 C816.9 208.2 816.7 210.0 816.6 210.5" fill="none" stroke="#171717" stroke-width="1.3" stroke-linejoin="round" stroke-linecap="round"/>
<path d="M884.5 161.3 C884.6 167.8 884.8 189.9 885.0 200.0 C885.2 210.1 885.3 214.5 885.5 222.0 C885.7 229.5 886.2 241.2 886.3 245.0 C889.8 246.1 901.5 249.8 907.5 251.5 C913.5 253.2 913.8 252.8 922.5 255.0 C931.2 257.2 947.5 261.2 960.0 265.0 C972.5 268.8 985.0 272.9 997.5 277.5 C1010.0 282.1 1023.8 287.5 1035.0 292.5 C1046.2 297.5 1055.8 302.1 1065.0 307.5 C1074.2 312.9 1082.5 318.8 1090.0 325.0 C1097.5 331.2 1104.6 338.3 1110.0 345.0 C1115.4 351.7 1119.4 359.5 1122.5 365.0 C1125.6 370.5 1126.8 374.2 1128.5 378.0 C1130.2 381.8 1131.3 383.9 1132.5 388.0 C1133.7 392.1 1134.9 397.2 1135.5 402.5 C1136.1 407.8 1136.2 417.1 1136.3 420.0 C1136.5 423.3 1137.4 435.0 1137.6 440.0 C1137.8 445.0 1137.6 446.4 1137.4 450.0 C1137.2 453.6 1137.4 457.2 1136.6 461.7 C1135.8 466.1 1134.8 472.0 1132.6 476.7 C1130.4 481.4 1127.3 486.1 1123.5 490.0 C1119.7 493.9 1115.0 497.1 1110.0 500.0 C1105.0 502.9 1099.5 505.3 1093.4 507.5 C1087.3 509.7 1079.2 511.9 1073.4 513.4 C1067.6 514.9 1060.9 516.2 1058.4 516.7 C1057.5 517.3 1055.5 517.7 1053.0 520.5 C1050.5 523.3 1046.8 528.4 1043.4 533.4 C1040.0 538.4 1034.4 547.6 1032.6 550.4 C1029.9 547.1 1023.0 540.1 1016.7 530.9 C1010.4 521.7 998.4 501.0 994.7 495.0 C997.8 493.3 1007.5 488.2 1013.4 485.0 C1019.3 481.8 1025.0 479.8 1030.0 475.9 C1035.0 472.0 1039.8 466.3 1043.4 461.7 C1047.0 457.1 1049.6 452.1 1051.7 448.3 C1053.8 444.5 1055.3 440.4 1056.0 438.8" fill="none" stroke="#171717" stroke-width="1.3" stroke-linejoin="round" stroke-linecap="round"/>
<path d="M886.3 245.0 C886.9 247.9 888.1 257.1 890.0 262.5 C891.9 267.9 894.2 272.5 897.5 277.5 C900.8 282.5 904.6 287.9 910.0 292.5 C915.4 297.1 922.5 300.8 930.0 305.0 C937.5 309.2 946.7 313.8 955.0 317.5 C963.3 321.2 971.7 323.8 980.0 327.5 C988.3 331.2 997.9 335.8 1005.0 340.0 C1012.1 344.2 1017.1 347.9 1022.5 352.5 C1027.9 357.1 1033.3 361.9 1037.5 367.5 C1041.7 373.1 1044.2 379.8 1047.5 386.0 C1050.8 392.2 1055.4 398.5 1057.5 405.0 C1059.6 411.5 1060.2 419.4 1060.0 425.0 C1059.8 430.6 1056.7 436.5 1056.0 438.8" fill="none" stroke="#171717" stroke-width="1.3" stroke-linejoin="round" stroke-linecap="round"/>
<path d="M845.5 332.4 C846.4 333.8 848.4 337.9 851.0 340.6 C853.6 343.3 857.1 346.5 860.9 348.8 C864.7 351.1 869.4 353.0 874.0 354.6 C878.6 356.2 883.6 357.4 888.8 358.7 C894.0 360.0 896.0 360.4 905.0 362.3 C914.0 364.2 931.2 367.5 942.5 370.0 C953.8 372.5 962.9 374.8 972.5 377.5 C982.1 380.2 991.7 382.7 1000.0 386.0 C1008.3 389.3 1015.8 393.1 1022.5 397.5 C1029.2 401.9 1035.0 407.5 1040.0 412.5 C1045.0 417.5 1049.8 423.1 1052.5 427.5 C1055.2 431.9 1055.4 436.9 1056.0 438.8" fill="none" stroke="#171717" stroke-width="1.3" stroke-linejoin="round" stroke-linecap="round"/>
<path d="M1136.3 420.0 C1135.5 422.1 1133.4 428.6 1131.5 432.5 C1129.6 436.4 1128.6 438.7 1125.0 443.3 C1121.4 447.9 1116.1 454.4 1110.0 460.0 C1103.9 465.6 1096.2 471.4 1088.4 476.7 C1080.6 482.0 1070.9 487.4 1063.4 491.7 C1055.9 496.0 1049.0 498.9 1043.4 502.5 C1037.8 506.1 1034.5 508.7 1030.0 513.4 C1025.5 518.1 1018.9 528.0 1016.7 530.9" fill="none" stroke="#171717" stroke-width="1.3" stroke-linejoin="round" stroke-linecap="round"/>
<path d="M785.0 414.7 L924.3 394.2 L967.6 470.0 L967.6 540.0 L828.5 561.5 L785.0 485.0Z" fill="#dedfe1"/>
<path d="M828.5 491.5 L967.6 470.0 L967.6 540.0 L828.5 561.5Z" fill="#dcdfe4"/>
<path d="M806.0 482.0 L924.3 464.2 L931.5 475.8 L822.0 492.3Z" fill="#e7e8ea"/>
<path d="M785.0 414.7 L924.3 394.2 M924.3 394.2 L967.6 470.0 M967.6 470.0 L828.5 491.5 M828.5 491.5 L785.0 414.7 M785.0 485.0 L924.3 464.2 M924.3 464.2 L967.6 540.0 M967.6 540.0 L828.5 561.5 M828.5 561.5 L785.0 485.0 M785.0 414.7 L785.0 485.0 M924.3 394.2 L924.3 464.2 M967.6 470.0 L967.6 540.0 M828.5 491.5 L828.5 561.5" fill="none" stroke="#fff" stroke-width="6.4" stroke-linecap="round" opacity="1"/>
<path d="M785.0 414.7 L924.3 394.2 M924.3 394.2 L967.6 470.0 M967.6 470.0 L828.5 491.5 M828.5 491.5 L785.0 414.7 M785.0 485.0 L924.3 464.2 M924.3 464.2 L967.6 540.0 M967.6 540.0 L828.5 561.5 M828.5 561.5 L785.0 485.0 M785.0 414.7 L785.0 485.0 M924.3 394.2 L924.3 464.2 M967.6 470.0 L967.6 540.0 M828.5 491.5 L828.5 561.5" fill="none" stroke="#0c0c0c" stroke-width="2.5" stroke-linecap="round"/>
<path d="M861.6 536 V580.3 L872.7 585.8 L885.9 588.3 H895.8 L907.3 585.8 L918.6 577.5 V536 C918.6 527 906 522.2 891 522.2 C875 522.2 861.6 527 861.6 536 Z" fill="#d9dbde" stroke="#fff" stroke-width="6" stroke-linejoin="round"/>
<path d="M828.5 561.5 L967.6 540.0" fill="none" stroke="#0c0c0c" stroke-width="2.5" stroke-linecap="round"/>
<path d="M861.6 536 V580.3 L872.7 585.8 L885.9 588.3 H895.8 L907.3 585.8 L918.6 577.5 V536 C918.6 527 906 522.2 891 522.2 C875 522.2 861.6 527 861.6 536 Z" fill="none" stroke="#0c0c0c" stroke-width="2.2" stroke-linejoin="round" stroke-linecap="round"/>
<path d="M864.3 539 V579.5" fill="none" stroke="#0c0c0c" stroke-width="2.2" stroke-linejoin="round" stroke-linecap="round" stroke-width="1.3"/>
<path d="M865.2 538.5 C866 548 878 552.6 891 552.6 C904 552.6 916 548 916.8 538.5" fill="none" stroke="#0c0c0c" stroke-width="2.2" stroke-linejoin="round" stroke-linecap="round" stroke-width="1.8"/>
<path d="M866.5 535 C868.5 528.5 879 525.4 891 525.4 C903 525.4 913.5 528.5 915.5 535" fill="none" stroke="#0c0c0c" stroke-width="2.2" stroke-linejoin="round" stroke-linecap="round" stroke-width="1.2"/>
<ellipse cx="890.5" cy="540.2" rx="21.6" ry="9.4" fill="none" stroke="#0c0c0c" stroke-width="2.2" stroke-linejoin="round" stroke-linecap="round" stroke-width="1.8"/>
<path d="M887.5 522.5 V554.5 M893.3 554.5 V588 M864 566 Q880 564 886.5 556 M894.5 557 Q902 564 918 563.5 M866 549 Q876 554 887 555.5 M894 556.5 Q907 555 916 547" fill="none" stroke="#0c0c0c" stroke-width="2.2" stroke-linejoin="round" stroke-linecap="round" stroke-width="1.6"/>
<path d="M877.7 592.4 L902.3 592.4 L890.3 600.5 Z" fill="#d2d2d2" opacity=".75"/>
<ellipse cx="890.3" cy="598.6" rx="3.5" ry="2.6" fill="#0a0a0a"/>
</svg>

<!-- ================= toolbar ================= -->
<div id="tb">
  <div class="sep" style="left:70px"></div>
  <div class="sep" style="left:131px"></div>
  <div class="sep" style="left:370px"></div>
  <div class="sep" style="left:425px"></div>
  <div class="sel"></div>
<svg class="abs" style="left:0;top:0" width="489" height="62" viewBox="604 4 489 62">
<path d="M641.80 20.90 L650.80 25.98 M650.80 25.98 L650.80 36.12 M650.80 36.12 L641.80 41.20 M641.80 41.20 L632.80 36.12 M632.80 36.12 L632.80 25.98 M632.80 25.98 L641.80 20.90 M641.80 31.05 L632.80 25.98 M641.80 31.05 L650.80 25.98 M641.80 31.05 L641.80 41.20" fill="none" stroke="#6e635d" stroke-width="1.0" stroke-linecap="round" stroke-linejoin="round" />
<path d="M641.80 31.05 L641.80 41.20 M632.80 25.98 L632.80 36.12 M650.80 25.98 L650.80 36.12" fill="none" stroke="#6e635d" stroke-width="1.5" stroke-linecap="round" stroke-linejoin="round" />
<path d="M641.80 20.90 L641.80 19.10 M632.80 36.12 L630.40 37.52 M650.80 36.12 L653.10 37.52" fill="none" stroke="#6e635d" stroke-width="1.0" stroke-linecap="round" stroke-linejoin="round" />
<path d="M654.6 48.4 H659.7 V44.2" fill="none" stroke="#a6a6a6" stroke-width="1"/>
<polygon points="702.80,19.60 712.20,24.90 702.80,30.20 693.40,24.90" fill="#e9e9e9" />
<polygon points="693.40,24.90 702.80,30.20 702.80,40.80 693.40,35.50" fill="#9c9c9c" />
<polygon points="702.80,30.20 712.20,24.90 712.20,35.50 702.80,40.80" fill="#cbcdcf" />
<path d="M702.80 19.60 L712.20 24.90 M712.20 24.90 L712.20 35.50 M712.20 35.50 L702.80 40.80 M702.80 40.80 L693.40 35.50 M693.40 35.50 L693.40 24.90 M693.40 24.90 L702.80 19.60 M702.80 30.20 L693.40 24.90 M702.80 30.20 L712.20 24.90 M702.80 30.20 L702.80 40.80" fill="none" stroke="#9a9a9a" stroke-width="0.8" stroke-linecap="round" stroke-linejoin="round" />
<path d="M716.2 48.4 H720.6 V44.2" fill="none" stroke="#aaaaaa" stroke-width="1"/>
<polygon points="762.50,20.40 771.10,25.50 762.50,30.60 753.90,25.50" fill="#f5b9a1" />
<polygon points="753.90,25.50 762.50,30.60 762.50,40.80 753.90,35.70" fill="#e0602a" />
<polygon points="762.50,30.60 771.10,25.50 771.10,35.70 762.50,40.80" fill="#ee8b5d" />
<path d="M762.50 20.40 L771.10 25.50 M771.10 25.50 L771.10 35.70 M771.10 35.70 L762.50 40.80 M762.50 40.80 L753.90 35.70 M753.90 35.70 L753.90 25.50 M753.90 25.50 L762.50 20.40 M762.50 30.60 L753.90 25.50 M762.50 30.60 L771.10 25.50 M762.50 30.60 L762.50 40.80" fill="none" stroke="#111" stroke-width="1.2" stroke-linecap="round" stroke-linejoin="round" />
<circle cx="762.50" cy="20.40" r="1.9" fill="#0a0a0a"/><circle cx="771.10" cy="25.50" r="1.9" fill="#0a0a0a"/><circle cx="771.10" cy="35.70" r="1.9" fill="#0a0a0a"/><circle cx="762.50" cy="40.80" r="1.9" fill="#0a0a0a"/><circle cx="753.90" cy="35.70" r="1.9" fill="#0a0a0a"/><circle cx="753.90" cy="25.50" r="1.9" fill="#0a0a0a"/><circle cx="762.50" cy="30.60" r="1.9" fill="#0a0a0a"/>
<polygon points="821.70,20.40 830.30,25.50 821.70,30.60 813.10,25.50" fill="#ffffff" />
<polygon points="813.10,25.50 821.70,30.60 821.70,40.80 813.10,35.70" fill="#e0602a" />
<polygon points="821.70,30.60 830.30,25.50 830.30,35.70 821.70,40.80" fill="#ffffff" />
<path d="M821.70 20.40 L830.30 25.50 M830.30 25.50 L830.30 35.70 M830.30 35.70 L821.70 40.80 M821.70 40.80 L813.10 35.70 M813.10 35.70 L813.10 25.50 M813.10 25.50 L821.70 20.40 M821.70 30.60 L813.10 25.50 M821.70 30.60 L830.30 25.50 M821.70 30.60 L821.70 40.80" fill="none" stroke="#111" stroke-width="1.2" stroke-linecap="round" stroke-linejoin="round" />
<circle cx="821.70" cy="20.40" r="1.9" fill="#0a0a0a"/><circle cx="830.30" cy="25.50" r="1.9" fill="#0a0a0a"/><circle cx="830.30" cy="35.70" r="1.9" fill="#0a0a0a"/><circle cx="821.70" cy="40.80" r="1.9" fill="#0a0a0a"/><circle cx="813.10" cy="35.70" r="1.9" fill="#0a0a0a"/><circle cx="813.10" cy="25.50" r="1.9" fill="#0a0a0a"/><circle cx="821.70" cy="30.60" r="1.9" fill="#0a0a0a"/>
<path d="M881.60 20.80 L889.80 25.80 M889.80 25.80 L889.80 35.80 M889.80 35.80 L881.60 40.80 M881.60 40.80 L873.40 35.80 M873.40 35.80 L873.40 25.80 M873.40 25.80 L881.60 20.80 M881.60 30.80 L873.40 25.80 M881.60 30.80 L889.80 25.80 M881.60 30.80 L881.60 40.80" fill="none" stroke="#f0b49c" stroke-width="1.0" stroke-linecap="round" stroke-linejoin="round" />
<circle cx="881.60" cy="20.80" r="2.1" fill="#858585"/><circle cx="889.80" cy="25.80" r="2.1" fill="#858585"/><circle cx="889.80" cy="35.80" r="2.1" fill="#858585"/><circle cx="881.60" cy="40.80" r="2.1" fill="#858585"/><circle cx="873.40" cy="35.80" r="2.1" fill="#858585"/><circle cx="873.40" cy="25.80" r="2.1" fill="#858585"/><circle cx="881.60" cy="30.80" r="2.1" fill="#858585"/>
<path d="M940.50 20.80 L948.70 25.80 M948.70 25.80 L948.70 35.80 M948.70 35.80 L940.50 40.80 M940.50 40.80 L932.30 35.80 M932.30 35.80 L932.30 25.80 M932.30 25.80 L940.50 20.80 M940.50 30.80 L932.30 25.80 M940.50 30.80 L948.70 25.80 M940.50 30.80 L940.50 40.80" fill="none" stroke="#9a9a9a" stroke-width="1.0" stroke-linecap="round" stroke-linejoin="round" />
<circle cx="940.50" cy="20.80" r="2.1" fill="#f3b59d"/><circle cx="948.70" cy="25.80" r="2.1" fill="#f3b59d"/><circle cx="948.70" cy="35.80" r="2.1" fill="#f3b59d"/><circle cx="940.50" cy="40.80" r="2.1" fill="#f3b59d"/><circle cx="932.30" cy="35.80" r="2.1" fill="#f3b59d"/><circle cx="932.30" cy="25.80" r="2.1" fill="#f3b59d"/><circle cx="940.50" cy="30.80" r="2.1" fill="#f3b59d"/>
<path d="M991.4 26.6 V24.2 H993.8 M996.6 24.2 H1001.8 M1004.6 24.2 H1007.4 V26.6 M1007.4 29.6 V32 M991.4 29.4 V32.2 M991.4 33 V34.8 H993.8 M996.6 34.8 H1001.8" fill="none" stroke="#0a0a0a" stroke-width="1.5"/>
<path d="M1004.3 32.2 L1004.3 41.2 L1006.5 39.2 L1008.2 43 L1009.7 42.3 L1008 38.6 L1010.8 38.4 Z" fill="#0a0a0a"/>
<path d="M1056.20 20.60 L1065.20 25.70 M1065.20 25.70 L1065.20 35.60 M1065.20 35.60 L1060.00 38.80 M1060.00 38.80 L1050.80 34.10 M1050.80 34.10 L1050.80 23.10 M1050.80 23.10 L1056.20 20.60 M1060.00 28.10 L1050.80 23.10 M1060.00 28.10 L1065.20 25.70 M1060.00 28.10 L1060.00 38.80 M1050.80 26.77 L1060.00 31.67 M1060.00 31.67 L1065.20 29.00 M1053.87 24.77 L1053.87 35.67 M1061.73 27.30 L1061.73 37.73 M1050.80 30.43 L1060.00 35.23 M1060.00 35.23 L1065.20 32.30 M1056.93 26.43 L1056.93 37.23 M1063.47 26.50 L1063.47 36.67 M1053.50 21.85 L1062.60 26.90 M1060.70 23.15 L1055.40 25.60" fill="none" stroke="#bcbcbc" stroke-width="0.8" stroke-linecap="round" stroke-linejoin="round" opacity=".9"/>
<circle cx="1056.20" cy="20.60" r="1.7" fill="#bcbcbc"/><circle cx="1065.20" cy="25.70" r="1.7" fill="#bcbcbc"/><circle cx="1065.20" cy="35.60" r="1.7" fill="#bcbcbc"/><circle cx="1060.00" cy="38.80" r="1.7" fill="#bcbcbc"/><circle cx="1050.80" cy="34.10" r="1.7" fill="#bcbcbc"/><circle cx="1050.80" cy="23.10" r="1.7" fill="#bcbcbc"/><circle cx="1060.00" cy="28.10" r="1.7" fill="#bcbcbc"/>
</svg>
</div>

<!-- ================= left panel ================= -->
<div id="lp">
  <div class="hd">
    <h1>Outlet_V2</h1>
    <div class="btn pri" style="left:377px;top:8px">
      <svg width="44" height="44" viewBox="0 0 44 44"><path d="M13.4 23 L19.1 28 L29.3 17.2" fill="none" stroke="#fff" stroke-width="1.7" stroke-linecap="round" stroke-linejoin="round"/></svg>
    </div>
    <div class="btn" style="left:426px;top:8px">
      <svg width="44" height="44" viewBox="0 0 44 44"><path d="M17 17 L27 27 M27 17 L17 27" fill="none" stroke="#4a4a4a" stroke-width="1.6" stroke-linecap="round"/></svg>
    </div>
  </div>
  <div id="scroll">
    <div class="row" style="top:4px">Upload date and time</div>
    <div class="row" style="top:-8px"><span class="v" style="letter-spacing:.5px">25/08/2020,</span></div>
    <div class="row" style="top:18px"><span class="v">20:33:45</span></div>
    <div class="row" style="top:54px">Number of solid bodies<span class="v">2</span></div>
    <div class="row" style="top:91px">Number of sheet bodies<span class="v">0</span></div>
    <div class="row" style="top:128px">Number of shells<span class="v">4</span></div>
    <div class="row" style="top:165px">Number of faces<span class="v">25</span></div>
    <div class="row" style="top:202px">Number of edges<span class="v">54</span></div>
    <div class="row" style="top:239px">Number of vertices<span class="v">34</span></div>
    <div class="row" style="top:276px">Geometry bounding box</div>
    <div class="row" style="top:302px">diagonal length</div>
    <div class="row" style="top:289px"><span class="v">9.502e-2 m</span></div>
    <div class="row" style="top:339px">Bounding box length in the x</div>
    <div class="row" style="top:365px;letter-spacing:.45px">direction</div>
    <div class="row" style="top:352px"><span class="v">4.864e-2 m</span></div>
    <div class="row" style="top:402px">Bounding box length in the y</div>
    <div class="row" style="top:428px;letter-spacing:.45px">direction</div>
    <div class="row" style="top:415px"><span class="v">4.385e-2 m</span></div>
    <div class="row" style="top:465px">Bounding box length in the z</div>
    <div class="row" style="top:491px;letter-spacing:.45px">direction</div>
    <div class="row" style="top:478px"><span class="v">6.885e-2 m</span></div>
    <div class="vl"></div><div class="trk"></div><div class="thb"></div>
  </div>
  <div class="ft"></div>
  <div class="btn" style="left:9px;top:594px">
    <svg width="44" height="44" viewBox="0 0 44 44"><path d="M22.4 12.6 V24.8 M17.6 20.2 L22.4 25 L27.2 20.2 M16 27.6 H29" fill="none" stroke="#5a5a5a" stroke-width="1.15" stroke-linecap="round" stroke-linejoin="round"/></svg>
  </div>
  <div class="btn" style="left:59px;top:594px">
    <svg width="44" height="44" viewBox="0 0 44 44"><g transform="translate(0.2,-1.4)" fill="none" stroke="#5a5a5a" stroke-width="1.15" stroke-linecap="round" stroke-linejoin="round"><path d="M14.6 15.6 H29.4"/><path d="M19 15.4 C19 12.4 25 12.4 25 15.4"/><path d="M16 15.8 V28.4 Q16 29.6 17.2 29.6 H26.8 Q28 29.6 28 28.4 V15.8"/><path d="M19.4 18.6 V26.8 M22 18.6 V26.8 M24.6 18.6 V26.8"/></g></svg>
  </div>
  <div id="create"><span style="display:inline-block">Create Simulation</span></div>
</div>

<!-- ================= right panel ================= -->
<svg class="abs" style="left:1205px;top:90px" width="10" height="24" viewBox="0 0 10 24"><path d="M3.5 2.5 V21.5 M7.5 2.5 V21.5" stroke="#c9d3df" stroke-width="1" fill="none"/></svg>
<div id="rp">
  <div class="selrow"></div>
  <div class="div"></div>
  <div class="sec" style="top:12px;letter-spacing:.1px">Geometry</div>
  <div class="sec" style="top:162px;letter-spacing:-.05px">Topological Entity Sets</div>
  <div class="it" style="left:81px;top:52px">Outlet_V2</div>
  <div class="it" style="left:135px;top:86px">solid1</div>
  <div class="it" style="left:135px;top:121px">solid2</div>
<svg class="abs" style="left:-18px;top:-5px" width="251" height="210" viewBox="1200 0 251 210">
<path d="M1243.5 31.6 L1248.5 26 L1253.5 31.6" fill="none" stroke="#c7d1dd" stroke-width="1.2"/>
<path d="M1243.5 180.6 L1248.5 175 L1253.5 180.6" fill="none" stroke="#c7d1dd" stroke-width="1.2"/>
<path d="M1246.5 51 V60" stroke="#dde3ea" stroke-width="1" fill="none"/>
<rect x="1239.7" y="60.8" width="13.6" height="13.4" fill="#fff" stroke="#c7d1dd" stroke-width="1.15"/>
<path d="M1243 67.4 H1250" stroke="#5f6f80" stroke-width="1.3" fill="none"/>
<path d="M1273.5 85 V120.5" stroke="#c7d1dd" stroke-width="1" fill="none"/>
<path d="M1273.5 102.5 H1283" stroke="#c7d1dd" stroke-width="1" fill="none"/>
<path d="M1276 136.8 H1283" stroke="#c7d1dd" stroke-width="1.8" fill="none"/>
<polygon points="1280.1,63.4 1285.8,61.3 1285.8,72.5 1276.2,77.6 1276.2,71.3 1280.1,68.6" fill="#c9c9c9"/>
<polygon points="1281,58.8 1285.8,61.3 1280.1,63.4 1276.2,60.9" fill="#ececec"/>
<polygon points="1276.2,60.9 1280.1,63.4 1280.1,68.6 1276.2,66.8" fill="#9a9a9a"/>
<polygon points="1271.5,69.2 1276.2,67 1280.1,68.6 1276.2,71.3" fill="#ececec"/>
<polygon points="1271.5,69.2 1276.2,71.3 1276.2,77.6 1271.5,75.5" fill="#9a9a9a"/>
<path d="M1297.8 102.4 C1301.9 94.4 1310.7 94.4 1314.8 102.4 C1310.7 110.4 1301.9 110.4 1297.8 102.4 Z" fill="#8e8e8e"/><circle cx="1306.3" cy="102.4" r="4.15" fill="#fff"/><circle cx="1306.3" cy="102.4" r="2.4" fill="#8e8e8e"/>
<path d="M1298.4 137.3 C1302.5 129.3 1311.3 129.3 1315.4 137.3 C1311.3 145.3 1302.5 145.3 1298.4 137.3 Z" fill="#8e8e8e"/><circle cx="1306.9" cy="137.3" r="4.15" fill="#fff"/><circle cx="1306.9" cy="137.3" r="2.4" fill="#8e8e8e"/>
<polygon points="1333.10,92.10 1342.10,97.30 1333.10,102.50 1324.10,97.30" fill="#ececec" /><polygon points="1324.10,97.30 1333.10,102.50 1333.10,112.90 1324.10,107.70" fill="#939393" /><polygon points="1333.10,102.50 1342.10,97.30 1342.10,107.70 1333.10,112.90" fill="#c8c9ca" />
<polygon points="1333.10,126.60 1342.10,131.80 1333.10,137.00 1324.10,131.80" fill="#ececec" /><polygon points="1324.10,131.80 1333.10,137.00 1333.10,147.40 1324.10,142.20" fill="#939393" /><polygon points="1333.10,137.00 1342.10,131.80 1342.10,142.20 1333.10,147.40" fill="#c8c9ca" />
</svg>
</div>
</body>
</html>
